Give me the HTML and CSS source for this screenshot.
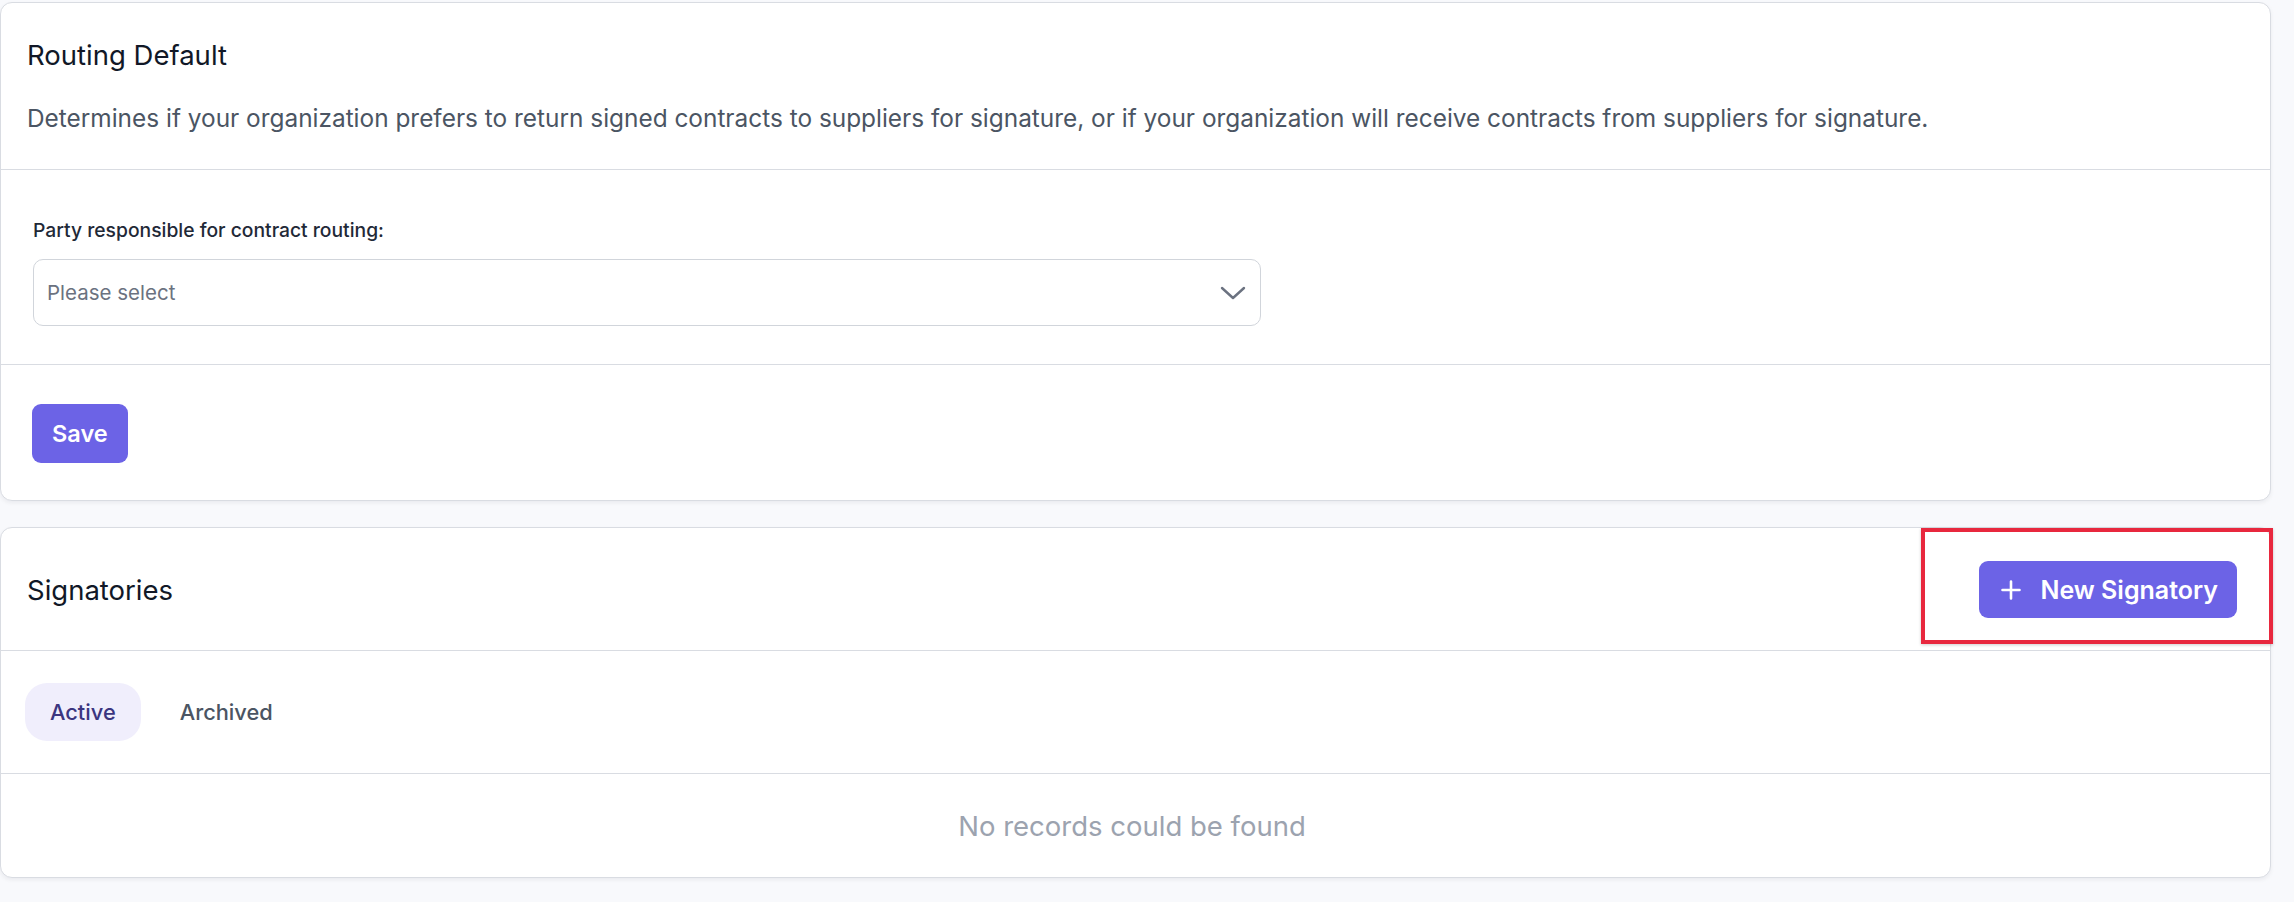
FILE: index.html
```html
<!DOCTYPE html>
<html>
	<head>
		<meta charset="UTF-8">
		<title>Contract routing</title>
		<link rel="stylesheet" href="styles.css">
	</head>
	<body>
		<div class="page">
			<section class="card">
				<div class="card-head">
					<h2 class="card-title">Routing Default</h2>
					<p class="card-desc">Determines if your organization prefers to return signed contracts to suppliers for signature, or if your organization will receive contracts from suppliers for signature.</p>
				</div>
				<div class="card-body">
					<label class="field-label">Party responsible for contract routing:</label>
					<div class="select">
						<span class="select-text">Please select</span>
						<svg class="chevron" width="26" height="14" viewBox="0 0 26 14"><path d="M2 2 L13 12 L24 2" fill="none" stroke="#6b7280" stroke-width="2.4" stroke-linecap="round" stroke-linejoin="round"/></svg>
					</div>
				</div>
				<div class="card-foot">
					<button class="btn">Save</button>
				</div>
			</section>

			<section class="card signatories">
				<div class="card-head head-row">
					<h2 class="card-title">Signatories</h2>
					<button class="btn btn-new">
						<svg width="20" height="20" viewBox="0 0 20 20"><path d="M10 1.5 V18.5 M1.5 10 H18.5" stroke="#fff" stroke-width="2.6" stroke-linecap="round"/></svg>
						<span>New Signatory</span>
					</button>
				</div>
				<div class="highlight"></div>
				<div class="tabs">
					<span class="tab active">Active</span>
					<span class="tab">Archived</span>
				</div>
				<div class="empty">No records could be found</div>
			</section>
		</div>
	</body>
</html>
```

FILE: styles.css
```css
* {
	margin: 0;
	padding: 0;
	box-sizing: border-box;
}

body {
	background: #f8f9fc;
	font-family: Inter, "Noto Sans", sans-serif;
	color: #111827;
}

.page {
	padding: 2px 23px 26px 0;
	display: flex;
	flex-direction: column;
	gap: 26px;
}

.card {
	background: #fff;
	border: 1px solid #d9dce2;
	border-radius: 12px;
	box-shadow: 0 2px 4px rgba(17, 24, 39, 0.06);
	position: relative;
}

.card-head {
	padding: 34px 26px 34px;
	border-bottom: 1px solid #d9dce2;
}

.card-title {
	font-size: 27.5px;
	font-weight: 400;
	line-height: 36px;
	color: #111827;
}

.card-desc {
	margin-top: 28px;
	font-size: 24.4px;
	line-height: 34px;
	color: #4b5563;
}

.card-body {
	padding: 46px 32px 38px;
	border-bottom: 1px solid #d9dce2;
}

.field-label {
	display: block;
	font-size: 19.3px;
	font-weight: 500;
	line-height: 28px;
	color: #1f2937;
}

.select {
	margin-top: 15px;
	width: 1228px;
	height: 67px;
	border: 1px solid #d1d5db;
	border-radius: 10px;
	display: flex;
	align-items: center;
	justify-content: space-between;
	padding: 0 14px 0 13px;
}

.select-text {
	font-size: 20.5px;
	color: #6b7280;
}

.card-foot {
	padding: 39px 31px 37px;
}

.btn {
	background: #6c63e6;
	color: #fff;
	border: none;
	border-radius: 9px;
	font-family: Inter, "Noto Sans", sans-serif;
	font-size: 23.5px;
	font-weight: 600;
	height: 59px;
	padding: 0 20px;
}

.head-row {
	display: flex;
	align-items: center;
	justify-content: space-between;
	padding: 33px 33px 32px 26px;
}

.btn-new {
	display: flex;
	align-items: center;
	gap: 19px;
	height: 57px;
	padding: 0 19px 0 22px;
	font-size: 25px;
}

.highlight {
	position: absolute;
	top: 0;
	right: -3px;
	width: 352px;
	height: 116px;
	border: 4px solid #e8283e;
	box-shadow: 0 1px 3px rgba(0, 0, 0, 0.2);
}

.tabs {
	display: flex;
	align-items: center;
	gap: 14px;
	padding: 32px 24px 32px;
	border-bottom: 1px solid #d9dce2;
}

.tab {
	height: 58px;
	line-height: 58px;
	padding: 0 25px;
	border-radius: 22px;
	font-size: 21.8px;
	font-weight: 500;
	color: #4b5563;
}

.tab.active {
	background: #f0eefc;
	color: #3b3580;
}

.empty {
	height: 103px;
	display: flex;
	align-items: center;
	justify-content: center;
	padding-right: 7px;
	font-size: 27.5px;
	color: #9ca3af;
}
```
